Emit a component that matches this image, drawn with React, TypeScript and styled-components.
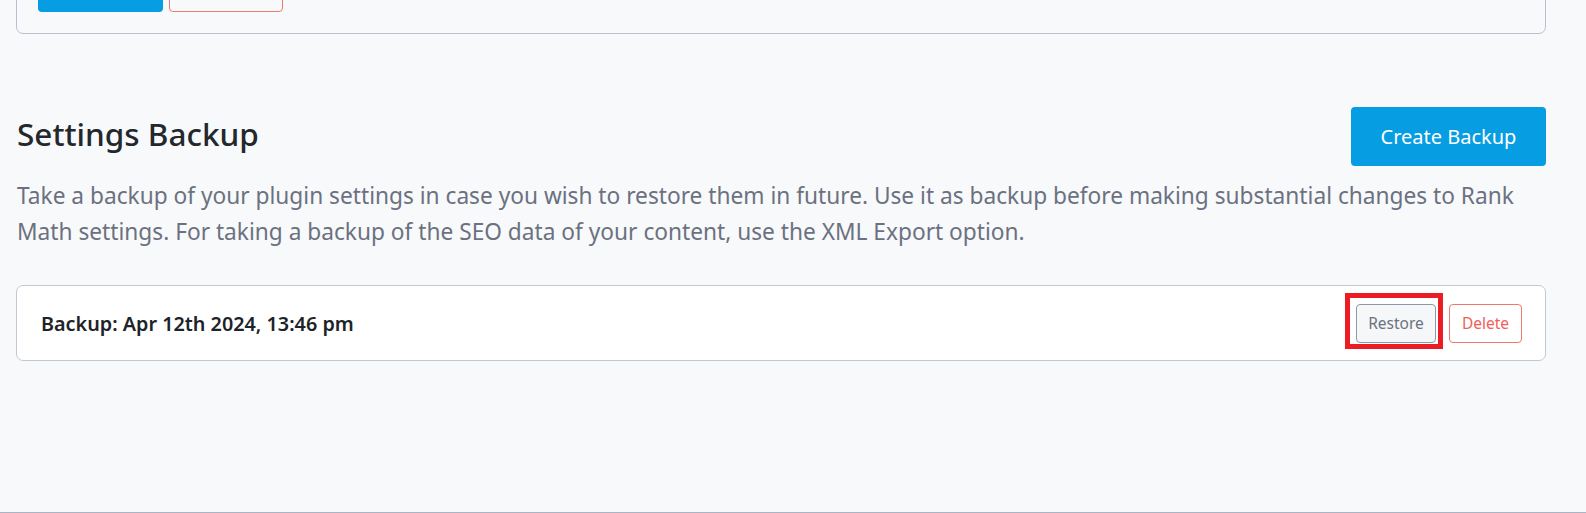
import * as React from 'react';
import styled, { createGlobalStyle } from 'styled-components';

const GlobalStyle = createGlobalStyle`
  * {
    margin: 0;
    padding: 0;
    box-sizing: border-box;
  }
  html, body {
    height: 100%;
    background: #f8f9fb;
    font-family: "Noto Sans", "Open Sans", sans-serif;
    overflow: hidden;
  }
`;

export default function App() {
  return (
    <>
      <GlobalStyle />
      <Page>
        {/* card above is scrolled mostly out of view */}
        <TopCard>
          <ButtonRow>
            <SolidButton $width={125} aria-label="Save Changes" />
            <OutlineButton $width={114} aria-label="Reset Options" />
          </ButtonRow>
        </TopCard>

        <Section>
          <HeaderRow>
            <Title>Settings Backup</Title>
            <CreateButton>Create Backup</CreateButton>
          </HeaderRow>
          <Description>
            Take a backup of your plugin settings in case you wish to restore them in future. Use it as backup before
            making substantial changes to Rank Math settings. For taking a backup of the SEO data of your content, use
            the XML Export option.
          </Description>

          <BackupItem>
            <BackupLabel>Backup: Apr 12th 2024, 13:46 pm</BackupLabel>
            <Actions>
              <Highlighted>
                <SmallButton $tone="neutral">Restore</SmallButton>
                <Marker />
              </Highlighted>
              <SmallButton $tone="danger">Delete</SmallButton>
            </Actions>
          </BackupItem>
        </Section>
      </Page>
    </>
  );
}

const Page = styled.div`
  display: flow-root;
  min-height: 100vh;
  padding: 0 40px 0 16px;
  border-bottom: 1px solid #aab4c4;
`;

const TopCard = styled.div`
  margin-top: -50px;
  padding: 21px;
  border: 1px solid #b9c1cd;
  border-radius: 7px;
`;

const ButtonRow = styled.div`
  display: flex;
  gap: 6px;
`;

const SolidButton = styled.button<{ $width: number }>`
  width: ${(p) => p.$width}px;
  height: 40px;
  border: none;
  border-radius: 4px;
  background: #069de3;
`;

const OutlineButton = styled.button<{ $width: number }>`
  width: ${(p) => p.$width}px;
  height: 40px;
  border: 1px solid #f0786e;
  border-radius: 4px;
  background: transparent;
`;

const Section = styled.section`
  padding-top: 73px;
`;

const HeaderRow = styled.div`
  display: flex;
  align-items: center;
  justify-content: space-between;
`;

const Title = styled.h2`
  margin: 0 0 7px 1px;
  font-size: 31.5px;
  font-weight: 500;
  color: #23282d;
`;

const CreateButton = styled.button`
  width: 195px;
  height: 59px;
  border: none;
  border-radius: 4px;
  background: #069de3;
  color: #fff;
  font: inherit;
  font-size: 20px;
`;

const Description = styled.p`
  margin-top: 12px;
  margin-left: 1px;
  font-size: 22.7px;
  line-height: 36px;
  color: #6b7180;
`;

const BackupItem = styled.div`
  display: flex;
  align-items: center;
  justify-content: space-between;
  height: 76px;
  margin-top: 35px;
  padding: 0 23px 0 24px;
  background: #fff;
  border: 1px solid #c3c9d4;
  border-radius: 7px;
`;

const BackupLabel = styled.span`
  font-size: 19.8px;
  font-weight: 600;
  color: #1d2327;
`;

const Actions = styled.div`
  display: flex;
  align-items: center;
  gap: 13px;
`;

const Highlighted = styled.span`
  position: relative;
  display: inline-flex;
`;

const Marker = styled.span`
  position: absolute;
  left: -11px;
  top: -11px;
  right: -7px;
  bottom: -6px;
  border: 5px solid #ec1c24;
  pointer-events: none;
`;

const SmallButton = styled.button<{ $tone: 'neutral' | 'danger' }>`
  width: ${(p) => (p.$tone === 'neutral' ? 80 : 73)}px;
  height: 39px;
  border: 1px solid ${(p) => (p.$tone === 'neutral' ? '#8f98a5' : '#f0786e')};
  border-radius: 4px;
  background: ${(p) => (p.$tone === 'neutral' ? '#f6f7f9' : '#fff')};
  color: ${(p) => (p.$tone === 'neutral' ? '#6b7280' : '#f0605a')};
  font: inherit;
  font-size: 15.5px;
`;
